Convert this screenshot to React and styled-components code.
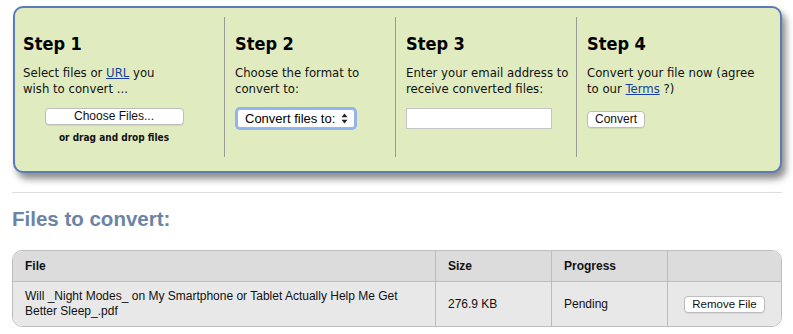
import React from 'react';
import styled, { createGlobalStyle } from 'styled-components';

const GlobalStyle = createGlobalStyle`
  body {
    margin: 0;
    background: #fff;
    font-family: "DejaVu Sans Condensed", "DejaVu Sans", Verdana, sans-serif;
  }
`;

const Page = styled.div`
  padding: 6px 11px 0 12px;
  width: 770px;
`;

const StepsPanel = styled.div`
  display: grid;
  grid-template-columns: 209px 171px 181px 1fr;
  margin-left: 1px;
  padding: 9px 0 14px;
  background: #e0ecbf;
  border: 2px solid #5b7bb6;
  border-radius: 10px;
  box-shadow: 4px 6px 7px rgba(0, 0, 0, 0.45);
`;

const Step = styled.div`
  padding: 0 4px 0 ${(p) => (p.first ? '8px' : '10px')};
  border-left: ${(p) => (p.first ? 'none' : '1px solid #999')};
  min-height: 140px;
`;

const StepTitle = styled.h2`
  margin: 16px 0 10px;
  font-size: 18px;
  line-height: 22px;
  font-weight: bold;
  color: #000;
`;

const StepText = styled.p`
  margin: 0 0 11px;
  font-size: 13px;
  line-height: 16px;
  white-space: nowrap;
  color: #111;
`;

const TextLink = styled.a`
  color: #1a3ea0;
  text-decoration: underline;
`;

const Centered = styled.div`
  display: flex;
  flex-direction: column;
  align-items: center;
  width: 182px;
`;

const MacButton = styled.button`
  height: 17px;
  width: ${(p) => p.width || 'auto'};
  padding: 0 7px;
  background: #fff;
  border: 1px solid #bdbdbd;
  border-radius: 4px;
  box-shadow: 0 1px 1px rgba(0, 0, 0, 0.08);
  font-family: "Liberation Sans", Arial, sans-serif;
  font-size: ${(p) => p.size || '12px'};
  line-height: 15px;
  color: #111;
`;

const DropNote = styled.div`
  margin-top: 7px;
  font-size: 10px;
  font-weight: bold;
  color: #111;
`;

const SelectBox = styled.div`
  box-sizing: border-box;
  display: inline-flex;
  align-items: center;
  justify-content: space-between;
  width: 118px;
  height: 19px;
  padding: 0 6px 0 7px;
  margin-left: 2px;
  background: #fff;
  border: 1px solid #9db7df;
  border-radius: 3px;
  box-shadow: 0 0 0 2px #8eb3ee;
  font-family: "Liberation Sans", Arial, sans-serif;
  font-size: 13px;
  color: #000;
`;

const EmailInput = styled.input`
  box-sizing: border-box;
  width: 146px;
  height: 21px;
  margin: 0;
  border: 1px solid #c4c4c4;
  background: #fff;
`;

const Divider = styled.hr`
  margin: 19px 0 0;
  border: 0;
  border-top: 1px solid #ddd;
`;

const SectionTitle = styled.h1`
  margin: 14px 0 19px;
  font-family: "Liberation Sans", Arial, sans-serif;
  font-size: 20.5px;
  line-height: 24px;
  font-weight: bold;
  color: #6c84a4;
`;

const TableWrap = styled.div`
  border: 1px solid #bdbdbd;
  border-radius: 10px;
  overflow: hidden;
`;

const Table = styled.table`
  width: 100%;
  border-collapse: collapse;
  font-family: "Liberation Sans", Arial, sans-serif;
  font-size: 12px;
  color: #111;
`;

const HeadCell = styled.th`
  height: 30px;
  padding: 0 12px;
  text-align: left;
  font-weight: bold;
  background: #dcdcdc;
  border-bottom: 1px solid #bdbdbd;
  border-left: ${(p) => (p.first ? 'none' : '1px solid #bdbdbd')};
  width: ${(p) => p.width};
`;

const Cell = styled.td`
  height: 44px;
  padding: 0 12px;
  background: #e8e8e8;
  line-height: 15px;
  text-align: ${(p) => p.align || 'left'};
  border-left: ${(p) => (p.first ? 'none' : '1px solid #bdbdbd')};
`;

const ArrowsIcon = () => (
  <svg width="7" height="11" viewBox="0 0 7 11">
    <path d="M3.5 0.5 L6.5 4.3 L0.5 4.3 Z" fill="#222" />
    <path d="M3.5 10.5 L6.5 6.7 L0.5 6.7 Z" fill="#222" />
  </svg>
);

export default function App() {
  return (
    <Page>
      <GlobalStyle />
      <StepsPanel>
        <Step first>
          <StepTitle>Step 1</StepTitle>
          <StepText>
            Select files or <TextLink href="#">URL</TextLink> you
            <br />
            wish to convert ...
          </StepText>
          <Centered>
            <MacButton width="139px">Choose Files...</MacButton>
            <DropNote>or drag and drop files</DropNote>
          </Centered>
        </Step>
        <Step>
          <StepTitle>Step 2</StepTitle>
          <StepText>
            Choose the format to
            <br />
            convert to:
          </StepText>
          <SelectBox>
            Convert files to:
            <ArrowsIcon />
          </SelectBox>
        </Step>
        <Step>
          <StepTitle>Step 3</StepTitle>
          <StepText>
            Enter your email address to
            <br />
            receive converted files:
          </StepText>
          <EmailInput type="text" />
        </Step>
        <Step>
          <StepTitle>Step 4</StepTitle>
          <StepText>
            Convert your file now (agree
            <br />
            to our <TextLink href="#">Terms</TextLink> ?)
          </StepText>
          <MacButton>Convert</MacButton>
        </Step>
      </StepsPanel>

      <Divider />
      <SectionTitle>Files to convert:</SectionTitle>

      <TableWrap>
        <Table>
          <thead>
            <tr>
              <HeadCell first width="398px">File</HeadCell>
              <HeadCell width="91px">Size</HeadCell>
              <HeadCell width="91px">Progress</HeadCell>
              <HeadCell />
            </tr>
          </thead>
          <tbody>
            <tr>
              <Cell first>
                Will _Night Modes_ on My Smartphone or Tablet Actually Help Me Get
                <br />
                Better Sleep_.pdf
              </Cell>
              <Cell>276.9 KB</Cell>
              <Cell>Pending</Cell>
              <Cell align="center">
                <MacButton size="11.5px">Remove File</MacButton>
              </Cell>
            </tr>
          </tbody>
        </Table>
      </TableWrap>
    </Page>
  );
}
